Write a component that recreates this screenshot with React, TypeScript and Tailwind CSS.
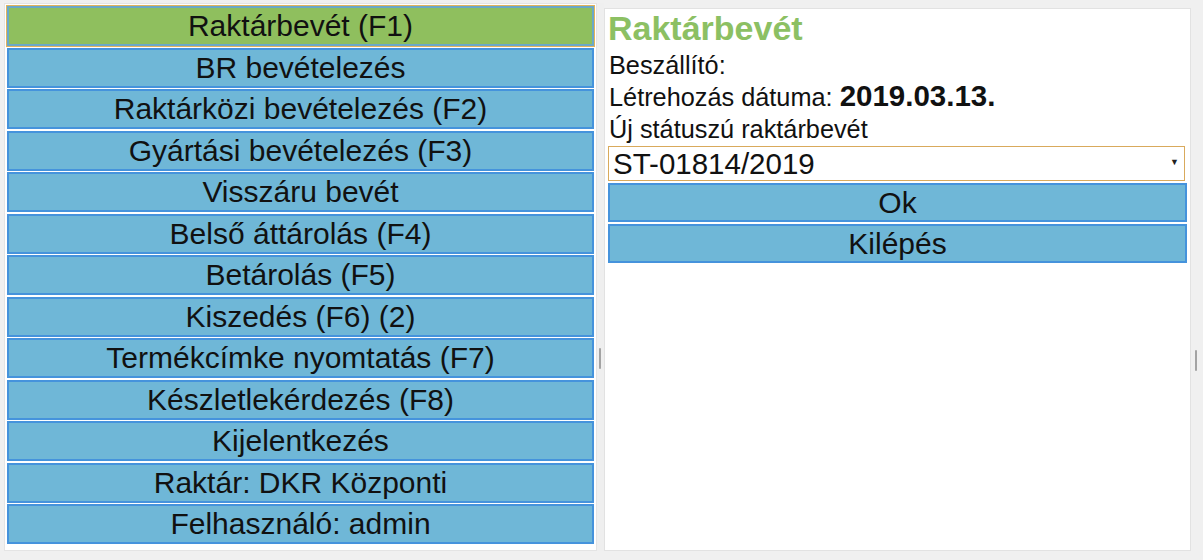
const menuItems = [
  "Raktárbevét (F1)",
  "BR bevételezés",
  "Raktárközi bevételezés (F2)",
  "Gyártási bevételezés (F3)",
  "Visszáru bevét",
  "Belső áttárolás (F4)",
  "Betárolás (F5)",
  "Kiszedés (F6) (2)",
  "Termékcímke nyomtatás (F7)",
  "Készletlekérdezés (F8)",
  "Kijelentkezés",
  "Raktár: DKR Központi",
  "Felhasználó: admin",
];

function MenuButton({ label, active }: { label: string; active?: boolean }) {
  return (
    <button
      className={
        active
          ? "h-[40px] w-full shrink-0 border-2 border-[#6aa8c8] bg-[#8fbf5e] text-[30px] leading-none text-[#111] outline outline-1 outline-[#e2b35c]"
          : "h-[40px] w-full shrink-0 border-2 border-[#4593dc] bg-[#6fb7d7] text-[30px] leading-none text-[#111]"
      }
    >
      {label}
    </button>
  );
}

export default function App() {
  return (
    <div className="flex h-[560px] w-[1203px] bg-[#f0f0f0] pl-1 pt-[3px] font-['Liberation_Sans',Arial,sans-serif] text-[#111]">
      {/* Menu */}
      <div className="flex h-[548px] w-[593px] flex-col gap-[1.5px] border border-[#e4e4e4] bg-white p-[2px]">
        {menuItems.map((item, i) => (
          <MenuButton key={item} label={item} active={i === 0} />
        ))}
      </div>

      {/* Splitter */}
      <div className="relative h-[548px] w-[7px] bg-[#efefef]">
        <div className="absolute left-[2px] top-[345px] h-[21px] w-[2px] rounded-sm bg-[#a3a3a3]" />
      </div>

      {/* Detail panel */}
      <div className="mt-[5px] flex h-[543px] w-[587px] flex-col border border-[#e2e2e2] bg-white px-[3px]">
        <div className="text-[34px] font-bold leading-[1.15] text-[#8cc063]">Raktárbevét</div>
        <div className="ml-[1px] mt-[1px] h-[32px] text-[25.3px] leading-[32px]">Beszállító:</div>
        <div className="ml-[1px] h-[32px] whitespace-nowrap text-[25.3px] leading-[32px]">
          Létrehozás dátuma: <span className="text-[29.5px] font-bold leading-none">2019.03.13.</span>
        </div>
        <div className="ml-[1px] h-[32px] text-[25.3px] leading-[32px]">Új státuszú raktárbevét</div>
        <div className="relative mt-[1px] flex h-[35px] w-[577px] items-center border border-[#d9aa5c] bg-white pl-[4px] text-[29.5px] leading-none">
          ST-01814/2019
          <span className="absolute right-[5px] top-[11px] text-[9px] text-[#222]">▼</span>
        </div>
        <button className="mt-[2px] h-[39px] w-full border-2 border-[#4593dc] bg-[#6fb7d7] text-[30px] leading-none text-[#111]">
          Ok
        </button>
        <button className="mt-[2px] h-[39px] w-full border-2 border-[#4593dc] bg-[#6fb7d7] text-[30px] leading-none text-[#111]">
          Kilépés
        </button>
      </div>

      {/* Right scroll strip */}
      <div className="relative mt-[5px] h-[543px] w-[12px] bg-[#f0f0f0]">
        <div className="absolute left-[4px] top-[342px] h-[21px] w-[2px] rounded-sm bg-[#a3a3a3]" />
      </div>
    </div>
  );
}
